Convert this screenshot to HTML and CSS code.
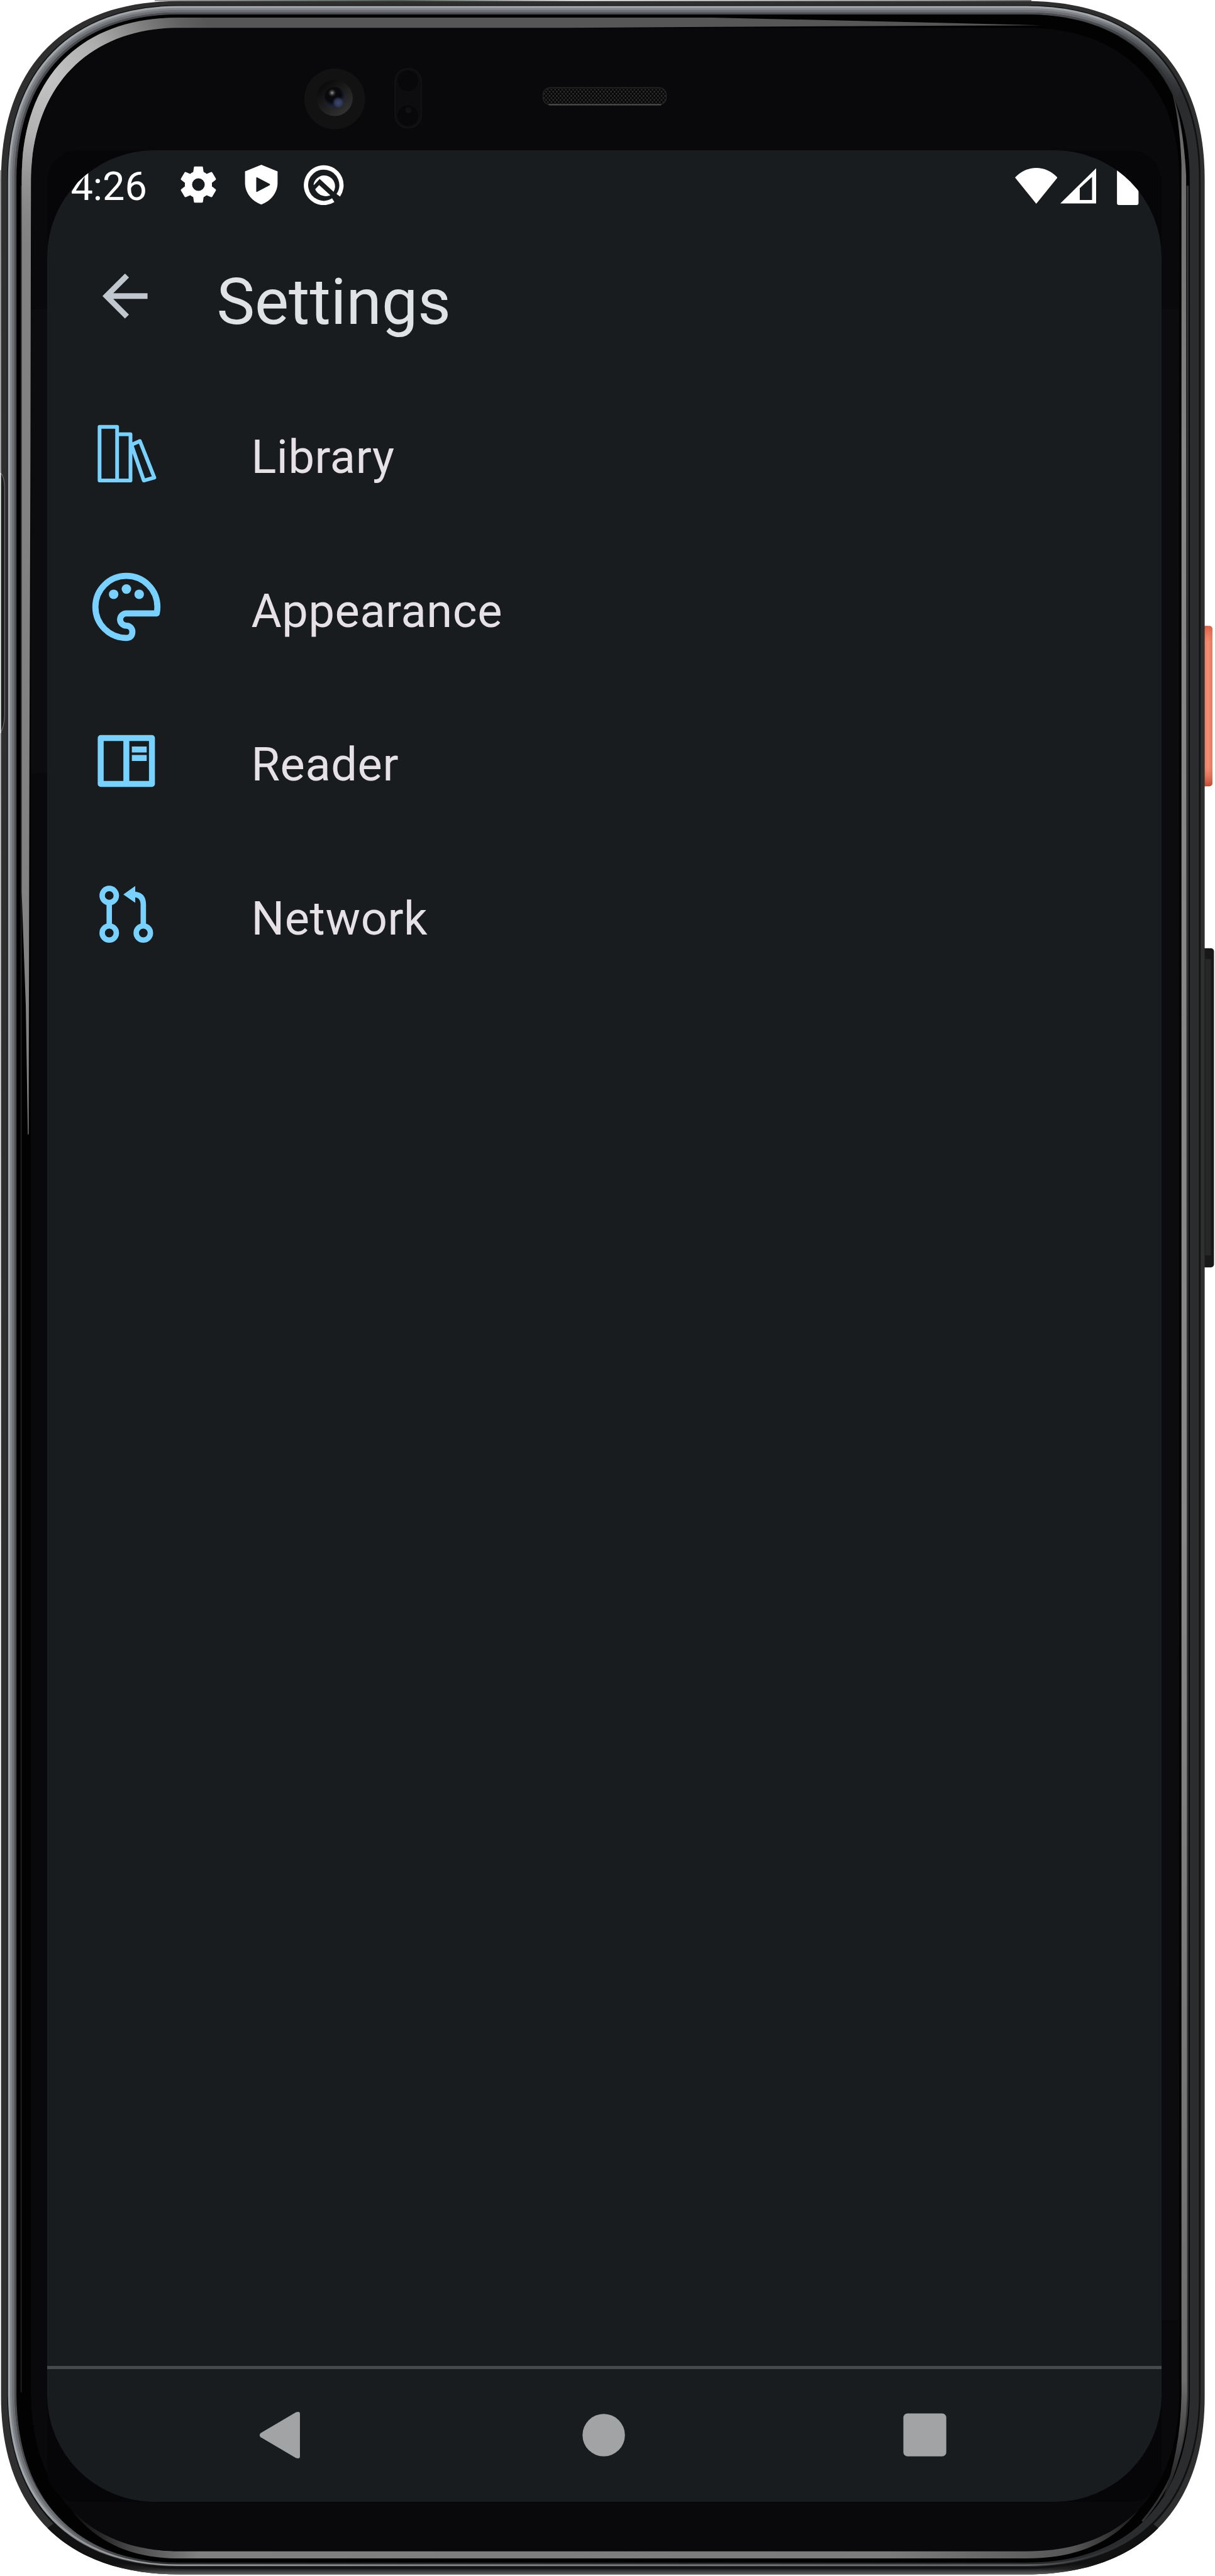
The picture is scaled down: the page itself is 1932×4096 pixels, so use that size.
FILE: index.html
```html
<!DOCTYPE html>
<html lang="en">
<head>
<meta charset="utf-8">
<title>Settings</title>
<link rel="stylesheet" href="styles.css">
</head>
<body>
<div class="phone">
  <svg class="bezel" viewBox="0 0 2356 4996" preserveAspectRatio="none" aria-hidden="true">
    <defs>
      <linearGradient id="orange" x1="0" x2="1" y1="0" y2="0">
        <stop offset="0" stop-color="#e2694a"/><stop offset=".3" stop-color="#ee7f62"/><stop offset=".65" stop-color="#ee9078"/><stop offset="1" stop-color="#ec7453"/>
      </linearGradient>
      <linearGradient id="orangeEnds" x1="0" x2="0" y1="0" y2="1">
        <stop offset="0" stop-color="#d9583c" stop-opacity=".8"/><stop offset=".1" stop-color="#e96b4a" stop-opacity="0"/><stop offset=".88" stop-color="#e96b4a" stop-opacity="0"/><stop offset="1" stop-color="#b8432f" stop-opacity=".9"/>
      </linearGradient>
      <linearGradient id="topEdge" gradientUnits="userSpaceOnUse" x1="260" x2="1980" y1="0" y2="0">
        <stop offset="0" stop-color="#aaa"/><stop offset=".3" stop-color="#566057"/><stop offset=".5" stop-color="#e8e8e8"/><stop offset=".9" stop-color="#a0a0a0"/><stop offset="1" stop-color="#777"/>
      </linearGradient>
      <linearGradient id="leftEdge" gradientUnits="userSpaceOnUse" x1="0" x2="0" y1="330" y2="3000">
        <stop offset="0" stop-color="#999"/><stop offset=".4" stop-color="#bbb"/><stop offset="1" stop-color="#fff"/>
      </linearGradient>
      <linearGradient id="shine" gradientUnits="userSpaceOnUse" x1="60" x2="340" y1="0" y2="0">
        <stop offset="0" stop-color="#828282"/><stop offset="1" stop-color="#565656"/>
      </linearGradient>
      <radialGradient id="shineCorner" gradientUnits="userSpaceOnUse" cx="90" cy="150" r="330">
        <stop offset="0" stop-color="#c4c4c4"/><stop offset=".35" stop-color="#bdbdbd" stop-opacity=".8"/><stop offset="1" stop-color="#888" stop-opacity="0"/>
      </radialGradient>
      <linearGradient id="fadeRight" gradientUnits="userSpaceOnUse" x1="2130" x2="2290" y1="40" y2="190">
        <stop offset="0" stop-color="#000" stop-opacity="0"/><stop offset="1" stop-color="#000"/>
      </linearGradient>
      <linearGradient id="fadeBottom" gradientUnits="userSpaceOnUse" x1="90" x2="300" y1="4870" y2="4975">
        <stop offset="0" stop-color="#000" stop-opacity="0"/><stop offset="1" stop-color="#000"/>
      </linearGradient>
      <mask id="railMask" maskUnits="userSpaceOnUse" x="0" y="0" width="2356" height="4996">
        <rect width="2356" height="4996" fill="#fff"/>
        <rect x="1900" width="456" height="4996" fill="url(#fadeRight)"/>
        <rect y="4600" width="2356" height="396" fill="url(#fadeBottom)"/>
      </mask>
      <linearGradient id="rightShine" gradientUnits="userSpaceOnUse" x1="0" x2="0" y1="170" y2="4850">
        <stop offset="0" stop-color="#222"/><stop offset=".02" stop-color="#6a6a6a"/><stop offset=".15" stop-color="#858585"/><stop offset=".6" stop-color="#878787"/><stop offset=".95" stop-color="#6d6d6d"/><stop offset="1" stop-color="#1a1a1a"/>
      </linearGradient>
      <linearGradient id="bottomShine" gradientUnits="userSpaceOnUse" x1="130" x2="2250" y1="0" y2="0">
        <stop offset="0" stop-color="#0a0a0a"/><stop offset=".03" stop-color="#262626"/><stop offset=".06" stop-color="#4a4a4a"/><stop offset=".12" stop-color="#808080"/><stop offset=".75" stop-color="#7c7c7c"/><stop offset=".92" stop-color="#565656"/><stop offset="1" stop-color="#050505"/>
      </linearGradient>
      <linearGradient id="bottomLine" gradientUnits="userSpaceOnUse" x1="160" x2="2200" y1="0" y2="0">
        <stop offset="0" stop-color="#999"/><stop offset=".08" stop-color="#999"/><stop offset=".9" stop-color="#666"/><stop offset="1" stop-color="#333" stop-opacity="0"/>
      </linearGradient>
      <linearGradient id="bottomRim" gradientUnits="userSpaceOnUse" x1="0" x2="0" y1="4972" y2="4993">
        <stop offset="0" stop-color="#111"/><stop offset=".5" stop-color="#222"/><stop offset="1" stop-color="#666"/>
      </linearGradient>
      <radialGradient id="lens" cx=".42" cy=".35" r=".75">
        <stop offset="0" stop-color="#0a0a0c"/><stop offset=".5" stop-color="#09090c"/><stop offset=".8" stop-color="#20253a"/><stop offset="1" stop-color="#10121c"/>
      </radialGradient>
      <linearGradient id="lensRing" x1="0" y1="0" x2=".8" y2="1">
        <stop offset=".2" stop-color="#0c0c0d"/><stop offset="1" stop-color="#343434"/>
      </linearGradient>
      <radialGradient id="lensBlue"><stop offset="0" stop-color="#3f4a72"/><stop offset=".6" stop-color="#353e60" stop-opacity=".8"/><stop offset="1" stop-color="#222840" stop-opacity="0"/></radialGradient>
      <radialGradient id="glint"><stop offset="0" stop-color="#9b9b9b"/><stop offset="1" stop-color="#333" stop-opacity="0"/></radialGradient>
      <pattern id="mesh" width="7" height="8" patternUnits="userSpaceOnUse">
        <rect width="7" height="8" fill="#070707"/><rect x=".5" y=".5" width="2.600" height="3" fill="#3c3c3c"/><rect x="4" y="4.500" width="2.600" height="3" fill="#353535"/>
      </pattern>
    </defs>

    <!-- side buttons -->
    <rect x="2328" y="1214" width="23" height="311" rx="6" fill="url(#orange)"/>
    <rect x="2328" y="1214" width="23" height="311" rx="6" fill="url(#orangeEnds)"/>
    <rect x="2328" y="1839" width="26" height="619" rx="6" fill="#181818"/>
    <rect x="2337" y="1860" width="11" height="575" fill="#262727"/>

    <!-- light spill along the outer edge -->
    <path d="M300 1H2000" stroke="url(#topEdge)" stroke-width="3" fill="none"/>
    <path d="M1 330V3000" stroke="url(#leftEdge)" stroke-width="2" fill="none"/>

    <!-- body -->
    <path d="M347 2H1990C2211 2 2336 127 2336 348V4648C2336 4868 2211 4993 1990 4993H347C127 4993 2 4868 2 4648V348C2 127 127 2 347 2Z" fill="#2f2f2f"/>
    <path d="M92 4903C151 4962 237 4993 347 4993H1990C2100 4993 2187 4962 2246 4903L2230 4890Q2130 4970 1990 4970H347Q200 4970 110 4890Z" fill="url(#bottomRim)"/>
    <path d="M347 10H1990C2206 10 2328 132 2328 348V4640C2328 4857 2206 4982 1990 4982H347C136 4982 14 4857 14 4640V348C14 136 136 10 347 10Z" fill="#101112"/>
    <path d="M347 12H1990C2203 12 2325 134 2325 348V4640C2325 4855 2203 4978 1990 4978H347C138 4978 16 4855 16 4640V348C16 138 138 12 347 12Z" fill="#2a2c2e"/>

    <!-- metal rail -->
    <g fill="none" mask="url(#railMask)">
      <path d="M347 14H1990C2202 14 2323 135 2323 348V4640C2323 4853 2202 4975 1990 4975H347C139 4975 18 4853 18 4640V348C18 139 139 14 347 14Z" stroke="#a0a5aa" stroke-width="5"/>
      <path d="M347 18H1990C2199 18 2319 138 2319 348V4640C2319 4850 2199 4971 1990 4971H347C142 4971 22 4850 22 4640V348C22 142 142 18 347 18Z" stroke="#82868b" stroke-width="5"/>
      <path d="M347 22H1990C2197 22 2315 140 2315 348V4640C2315 4848 2197 4967 1990 4967H347C144 4967 26 4848 26 4640V348C26 144 144 22 347 22Z" stroke="#6c6e73" stroke-width="5"/>
      <path d="M347 26H1990C2194 26 2311 143 2311 348V4640C2311 4845 2194 4963 1990 4963H347C147 4963 30 4845 30 4640V348C30 147 147 26 347 26Z" stroke="#4a4b4f" stroke-width="4"/>
    </g>
    <path d="M347 28H1990C2190 28 2307 145 2307 348V4640C2307 4850 2190 4970 1990 4970H347C149 4970 32 4850 32 4640V348C32 149 149 28 347 28Z" fill="#020203"/>
    <path d="M105 4887C161 4944 243 4975 347 4975H1990C2096 4975 2179 4944 2236 4887" fill="none" stroke="url(#bottomLine)" stroke-width="3"/>
    <path d="M2303 360V4640C2303 4740 2275 4820 2215 4890" fill="none" stroke="#303233" stroke-width="4"/>
    <path d="M41 360V4640" stroke="#242424" stroke-width="2"/>

    <!-- glass -->
    <path d="M347 54H1990C2176 54 2287 165 2287 348V4640C2287 4835 2176 4948 1990 4948H347C172 4948 60 4835 60 4640V348C60 166 168 54 347 54Z" fill="#09090b"/>
    <path d="M60 600H92V1500H60ZM2252 600H2286V4500H2252Z" fill="#0c0b0e"/>
    <rect x="92" y="292" width="2160" height="4560" rx="60" fill="#060608"/>

    <!-- edge highlights -->
    <path d="M54 2200L50 1950L42 1729V348C42 151 154 34 347 34H1380L2020 49L1380 52L1100 54H347C172 54 62 168 60 348L59 900L57 1500L55.500 2200Z" fill="url(#shine)"/>
    <path d="M54 2200L50 1950L42 1729V348C42 151 154 34 347 34H1380L2020 49L1380 52L1100 54H347C172 54 62 168 60 348L59 900L57 1500L55.500 2200Z" fill="url(#shineCorner)"/>
    <path d="M2270 170Q2288 230 2291 320V4640Q2290 4750 2254 4848Q2300 4770 2302 4640L2300 340Q2294 230 2270 170Z" fill="url(#rightShine)"/>
    <path d="M138 4867C188 4920 260 4948 347 4948H1990C2083 4948 2157 4920 2208 4867C2160 4932 2085 4962 1990 4962H347C258 4962 186 4932 138 4867Z" fill="url(#bottomShine)"/>

    <!-- left slot -->
    <path d="M0 917Q9 922 9 950V1380Q9 1410 0 1422" fill="#1b1d1f" stroke="#6a6c6c" stroke-width="1.500"/>
    <path d="M0 917H2V1422H0Z" fill="#ececec"/>

    <!-- front camera, sensor and earpiece -->
    <circle cx="649" cy="192" r="59" fill="#121212"/>
    <circle cx="649" cy="190" r="35" fill="url(#lensRing)"/>
    <circle cx="649" cy="189" r="20" fill="url(#lens)"/>
    <circle cx="656" cy="199" r="12" fill="url(#lensBlue)"/>
    <circle cx="644" cy="180" r="8" fill="url(#glint)"/>
    <rect x="766" y="133" width="51" height="115" rx="25" fill="#0d0d0f" stroke="#151516" stroke-width="2"/>
    <circle cx="791" cy="157" r="21" fill="#08080a" stroke="#121214"/>
    <circle cx="791" cy="224" r="21" fill="#08080a" stroke="#121214"/>
    <circle cx="792" cy="214" r="6" fill="#111113"/>
    <rect x="1053" y="170" width="239" height="33" rx="14" fill="url(#mesh)" stroke="#222" stroke-width="2"/>
    <path d="M1064 203H1282" stroke="#4d504f" stroke-width="2.500"/>
  </svg>

  <main class="screen">
    <header class="status">
      <span class="clock">4:26</span>
      <div class="notices">
        <svg viewBox="0 0 24 24"><path fill-rule="evenodd" d="M19.43 12.98c.04-.32.07-.64.07-.98s-.03-.66-.07-.98l2.110-1.650c.19-.15.24-.42.12-.64l-2-3.460c-.12-.22-.39-.3-.61-.22l-2.490 1c-.52-.4-1.080-.73-1.690-.98l-.38-2.650C14.460 2.180 14.250 2 14 2h-4c-.25 0-.46.18-.49.42l-.38 2.650c-.61.25-1.170.59-1.690.98l-2.490-1c-.23-.09-.49 0-.61.22l-2 3.460c-.13.22-.07.49.12.64l2.110 1.650c-.04.32-.07.65-.07.98s.03.66.07.98l-2.110 1.650c-.19.15-.24.42-.12.64l2 3.460c.12.22.39.3.61.22l2.490-1c.52.4 1.080.73 1.690.98l.38 2.650c.03.24.24.42.49.42h4c.25 0 .46-.18.49-.42l.38-2.650c.61-.25 1.170-.59 1.690-.98l2.490 1c.23.09.49 0 .61-.22l2-3.460c.12-.22.07-.49-.12-.64zM12 15.500a3.500 3.500 0 1 1 0-7 3.500 3.500 0 0 1 0 7z"/></svg>
        <svg viewBox="0 0 24 24"><path fill-rule="evenodd" d="M12 1L21 4.700V11C21 16.500 17.300 21 12 23C6.700 21 3 16.500 3 11V4.700ZM9.200 8.500V15.700Q9.200 16.200 9.700 16L16.500 12.400Q17.200 12 16.500 11.600L9.700 8Q9.200 7.800 9.200 8.500Z"/></svg>
        <svg viewBox="0 0 24 24"><path d="M17 20.600A9.800 9.800 0 1 1 19.800 17.900" fill="none" stroke="#fff" stroke-width="2.400"/><path d="M6.100 12A6 6 0 1 1 17.200 16L9.500 8.900L6.300 12.300ZM7 14.600L9.200 12.300L15.400 17.900A6.500 6.500 0 0 1 7 14.600Z"/></svg>
      </div>
      <div class="signals">
        <svg class="wifi" viewBox="0 0 82 69"><path d="M0 18.500Q18 0 41 0T82 18.500L41 69Z"/></svg>
        <svg class="cell" viewBox="0 0 70 69"><path fill-rule="evenodd" d="M0 69L70 0V69ZM38 39V62H62V17Z"/></svg>
        <svg class="battery" viewBox="0 0 42 76"><path d="M0 10Q0 7 3 7H13V0H29V7H39Q42 7 42 10V72Q42 76 38 76H4Q0 76 0 72Z"/></svg>
      </div>
    </header>

    <div class="appbar">
      <svg class="back" viewBox="0 0 24 24"><path d="M20 11H7.830L13.420 5.410 12 4 4 12 12 20 13.410 18.590 7.830 13H20Z"/></svg>
      <h1 class="title">Settings</h1>
    </div>

    <nav class="list">
      <a class="row">
        <svg class="icon" viewBox="0 0 24 24" stroke-width="1.100" stroke-linejoin="round"><path d="M4.120 4.200H9.270V19.950H4.120ZM9.270 6.350H13.200V19.950H9.270M13.600 9.400L15.950 8.350 20.200 19.100 17.100 19.950 13.500 9.500"/></svg>
        <span class="label">Library</span>
      </a>
      <a class="row">
        <svg class="icon" viewBox="0 0 24 24" stroke-width="1.800" stroke-linejoin="round"><path d="M12 21.100A9.100 9.100 0 0 1 12 2.900A9.100 9.100 0 0 1 21.100 12Q21.100 13 20.900 13.900H12A1.850 1.800 0 0 0 10.150 15.700C10.150 16.700 11 17.500 12 17.500A1.750 1.800 0 0 1 13.750 19.300Q13.700 21.100 12 21.100Z"/><g class="solid"><circle cx="8.250" cy="8.300" r="1.400"/><circle cx="12" cy="6.750" r="1.400"/><circle cx="15.750" cy="8.300" r="1.400"/></g></svg>
        <span class="label">Appearance</span>
      </a>
      <a class="row">
        <svg class="icon" viewBox="0 0 24 24" stroke-width="1.750" stroke-linejoin="round"><path d="M4.450 5.280H19.500V18.720H4.450ZM11.980 5.300V18.700"/><path class="solid" d="M13.600 7.760H17.950V9.500H13.600ZM13.600 10.250H17.950V12H13.600Z"/></svg>
        <span class="label">Reader</span>
      </a>
      <a class="row">
        <svg class="icon" viewBox="0 0 24 24" stroke-width="1.600"><circle cx="6.960" cy="6.450" r="2.080"/><circle cx="6.960" cy="17.450" r="2.080"/><circle cx="16.960" cy="17.450" r="2.080"/><path d="M6.960 8.600V15.300M16.960 15.300V9Q16.900 6.120 14 6.120"/><path class="solid" d="M11.100 6.120L14.600 3.650V8.600Z"/></svg>
        <span class="label">Network</span>
      </a>
    </nav>

    <footer class="navbar">
      <svg viewBox="0 0 90 90"><path d="M3 41L71 1Q79 -2 79 4V86Q79 92 71 89L3 49Q-1 45 3 41Z"/></svg>
      <svg viewBox="0 0 90 90"><circle cx="45" cy="45" r="41"/></svg>
      <svg viewBox="0 0 90 90"><rect x="3" y="3" width="83" height="83" rx="8"/></svg>
    </footer>
  </main>
</div>
</body>
</html>
```
FILE: styles.css
```css
* {
  box-sizing: border-box;
}

body {
  margin: 0;
  background: #fff;
  font-family: Roboto, "Liberation Sans", sans-serif;
}

svg {
  display: block;
  flex: none;
}

.phone {
  position: relative;
  width: 1932px;
  height: 4096px;
  padding: 239.4px 85.300px 118px 75.400px;
  overflow: hidden;
}

/* device artwork behind the display */
.bezel {
  position: absolute;
  inset: 0;
  width: 100%;
  height: 100%;
}

.screen {
  position: relative;
  display: flex;
  flex-direction: column;
  height: 100%;
  background: #191c1e;
  border-radius: 170px;
  overflow: hidden;
}

.status {
  display: flex;
  align-items: center;
  height: 108.500px;
  padding: 0 36px 0 37px;
}

.clock {
  width: 169px;
  padding-top: 6px;
  color: #fff;
  font-size: 63px;
  line-height: 1;
}

.notices {
  display: flex;
  gap: 31px;
  fill: #fff;
}

.notices svg {
  width: 69px;
  height: 69px;
}

.signals {
  display: flex;
  align-items: flex-end;
  margin-left: auto;
  fill: #fff;
}

.wifi {
  width: 67.500px;
  height: 57px;
}

.cell {
  width: 57px;
  height: 57px;
  margin-left: 5px;
}

.battery {
  width: 34.500px;
  height: 62px;
  margin: 0 0 -2px 33px;
}

.appbar {
  display: flex;
  align-items: center;
  gap: 92px;
  height: 245.500px;
  margin-bottom: 5px;
  padding-left: 69.500px;
}

.back {
  width: 107.500px;
  height: 107.500px;
  fill: #c1c7ce;
}

.title {
  margin: 0;
  padding-top: 19px;
  color: #e1e2e5;
  font-size: 102px;
  font-weight: 400;
  line-height: 1;
}

.list {
  display: flex;
  flex: 1;
  flex-direction: column;
}

.row {
  display: flex;
  align-items: center;
  gap: 133px;
  height: 244.600px;
  padding-left: 61px;
}

.icon {
  width: 130px;
  height: 130px;
  fill: none;
  stroke: #79d1ff;
}

.solid {
  fill: #79d1ff;
  stroke: none;
}

.label {
  padding-top: 13px;
  color: #e6e1e5;
  font-size: 74px;
  letter-spacing: 0.6px;
  line-height: 1;
}

.navbar {
  display: flex;
  align-items: center;
  justify-content: space-between;
  height: 216.500px;
  padding: 0 338.500px 0 337px;
  border-top: 5px solid #48494a;
}

.navbar svg {
  width: 74px;
  height: 74px;
  fill: #a2a3a5;
}
```
